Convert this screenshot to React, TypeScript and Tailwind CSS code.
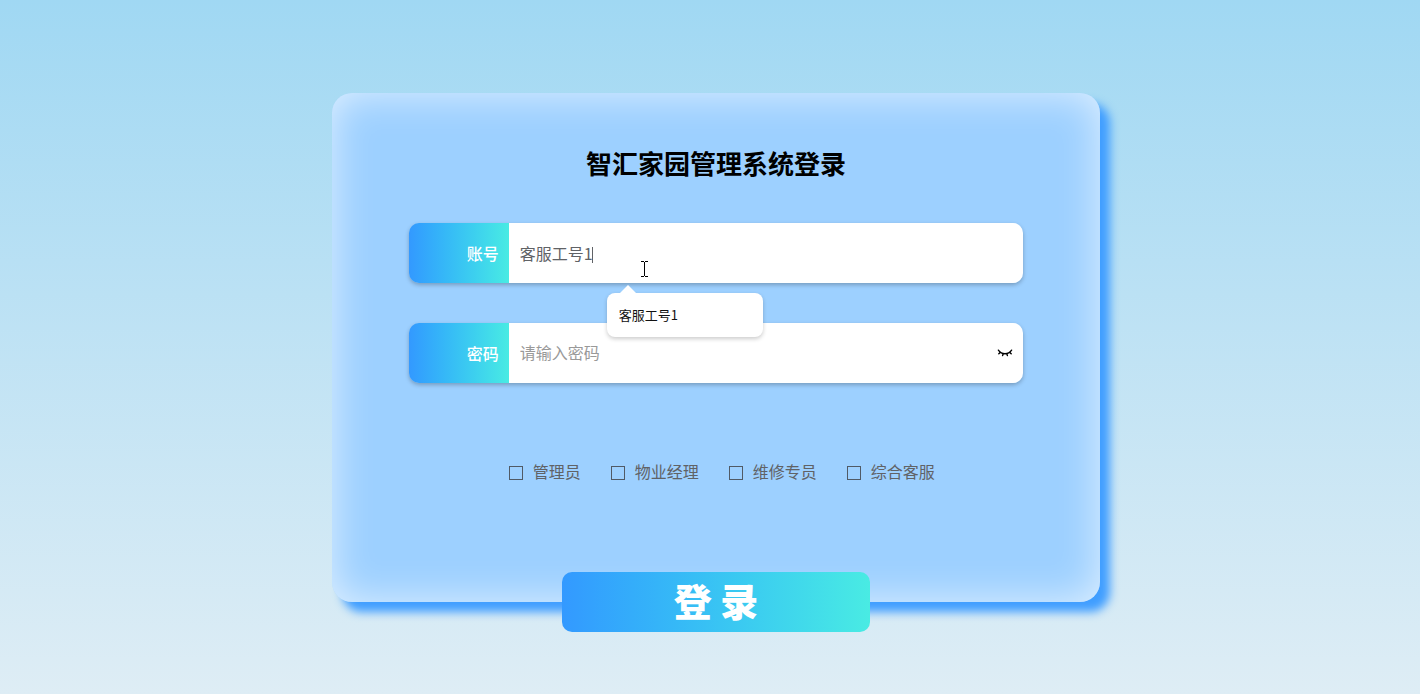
import { useState } from "react";

const roles = ["管理员", "物业经理", "维修专员", "综合客服"];

function ClosedEyeIcon() {
  return (
    <svg width="16" height="8" viewBox="0 0 16 8" fill="none" stroke="#000" strokeWidth="1.4" strokeLinecap="round" aria-hidden="true">
      <path d="M1.4 1.2C3.2 3.8 5.4 4.8 8 4.8s4.8-1 6.6-3.6" />
      <path d="M3.2 3.4 1.8 4.8M6.2 4.8 5.6 6.6M9.8 4.8l.6 1.8M12.8 3.4l1.4 1.4" />
    </svg>
  );
}

function TextCursor() {
  return (
    <svg className="pointer-events-none absolute left-[132px] top-[38px]" width="7" height="16" viewBox="0 0 7 16" fill="none" stroke="#000" shapeRendering="crispEdges" aria-hidden="true">
      <path d="M0 .5h3M4 .5h3M3.5 1v14M0 15.5h3M4 15.5h3" />
    </svg>
  );
}

const labelClass =
  "flex w-[100px] shrink-0 items-center justify-end rounded-l-[10px] bg-linear-to-r from-[#3399ff] to-[#49ebe3] pr-2.5 pb-px text-base font-medium text-white";
const inputClass =
  "h-full w-full rounded-r-[10px] bg-white px-[11px] text-base text-[#606266] outline-none placeholder:text-[#999999]";
const rowClass = "flex h-[60px] rounded-[10px] shadow-[0_2px_4px_rgba(0,0,0,0.25)]";

export default function App() {
  const [account, setAccount] = useState("客服工号1");
  const [password, setPassword] = useState("");
  const [focused, setFocused] = useState(false);
  const [picked, setPicked] = useState<string[]>([]);

  const toggle = (role: string) =>
    setPicked((now) => (now.includes(role) ? now.filter((r) => r !== role) : [...now, role]));

  return (
    <main className="flex min-h-screen flex-col items-center bg-linear-to-b from-[#a0d8f3] to-[#deedf5] pt-[93px] pb-[62px] pl-3 font-['Noto_Sans_CJK_SC',sans-serif]">
      <form
        onSubmit={(e) => e.preventDefault()}
        className="flex w-full max-w-3xl flex-col items-center rounded-[20px] bg-[#9dd0ff] pt-[51px] shadow-[inset_0_0_40px_rgba(255,255,255,0.7),10px_10px_10px_#409eff]"
      >
        <h1 className="text-[26px] leading-[38px] font-bold text-black">智汇家园管理系统登录</h1>

        <div className="mt-[41px] flex w-4/5 flex-col gap-10">
          <div className={rowClass}>
            <label htmlFor="account" className={labelClass}>账号</label>
            <div className="relative flex-1">
              <input
                id="account"
                value={account}
                onChange={(e) => setAccount(e.target.value)}
                onFocus={() => setFocused(true)}
                onBlur={() => setFocused(false)}
                autoComplete="off"
                className={inputClass}
              />
              {!focused && <span className="pointer-events-none absolute left-[83px] top-6 h-4 w-px bg-[#606266]" />}
              <TextCursor />
              <div className="absolute left-[98px] top-[70px] z-10 w-[156px] rounded-lg bg-white shadow-[0_2px_4px_rgba(0,0,0,0.2)]">
                <svg className="absolute -top-2 left-3" width="18" height="9" viewBox="0 0 18 9" fill="#fff" aria-hidden="true">
                  <path d="M0 9 9 0l9 9z" />
                </svg>
                <button
                  type="button"
                  onClick={() => setAccount("客服工号1")}
                  className="block h-11 w-full px-3 text-left text-[13px] text-[#111111]"
                >
                  客服工号1
                </button>
              </div>
            </div>
          </div>

          <div className={rowClass}>
            <label htmlFor="password" className={labelClass}>密码</label>
            <div className="relative flex-1">
              <input
                id="password"
                type="password"
                value={password}
                onChange={(e) => setPassword(e.target.value)}
                placeholder="请输入密码"
                className={`${inputClass} pb-0.5`}
              />
              <button type="button" aria-label="显示密码" className="absolute inset-y-0 right-2.5 flex items-center">
                <ClosedEyeIcon />
              </button>
            </div>
          </div>
        </div>

        <fieldset className="mt-[76px] flex w-4/5 flex-wrap gap-x-[30px] gap-y-2 pl-[100px]">
          {roles.map((role) => (
            <label key={role} className="flex items-center gap-2.5 text-base text-[#606266]">
              <input
                type="checkbox"
                checked={picked.includes(role)}
                onChange={() => toggle(role)}
                className="mt-1 size-3.5 appearance-none border border-[#505a66] checked:bg-[#3399ff]"
              />
              {role}
            </label>
          ))}
        </fieldset>

        <button
          type="submit"
          className="mt-[89px] -mb-[30px] h-[60px] w-2/5 rounded-[10px] bg-linear-to-r from-[#3399ff] to-[#49ebe3] pb-1 text-[38px] leading-none font-black text-white"
        >
          登 录
        </button>
      </form>
    </main>
  );
}
